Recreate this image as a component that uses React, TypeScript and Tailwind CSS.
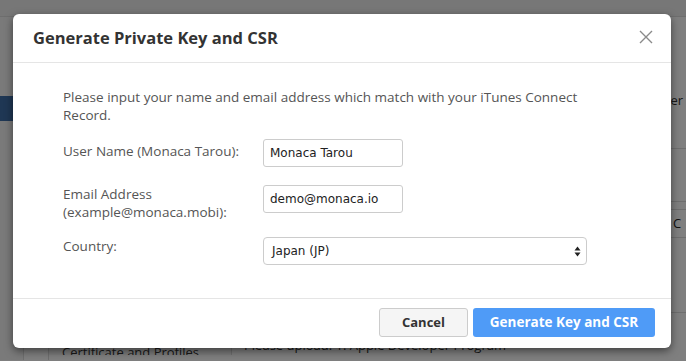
import React from "react";

export default function App() {
  const sans = { fontFamily: '"Open Sans", "Noto Sans", sans-serif' };
  const ui = { fontFamily: '"DejaVu Sans", Verdana, sans-serif' };
  return (
    <div className="relative w-[686px] h-[361px] overflow-hidden bg-white" style={sans}>
      {/* background page */}
      <div className="h-[17px] border-b border-[#dddddd] bg-[#eeeeee]" />
      <div className="flex h-[343px]">
        <div className="w-[24px] border-r border-[#dddddd] bg-[#f4f4f4]">
          <div className="mt-[79px] h-[25px] bg-[#3f6fa8]" />
        </div>
        <div className="w-[25px] border-r border-[#dddddd]" />
        <div className="flex-1 flex flex-col">
          <div className="h-[76px] shrink-0 flex items-end justify-end">
            <span className="text-[13px] text-[#333] leading-[18px] mb-[-16px] mr-[3px]">Register</span>
          </div>
          <div className="h-[56px] shrink-0 border-b border-[#dddddd]" />
          <div className="h-[53px] shrink-0 border-b border-[#dddddd]" />
          <div className="h-[8px] shrink-0 border-b border-[#dddddd]" />
          <div className="h-[28px] shrink-0 border-b border-[#dddddd] flex justify-end items-center">
            <span className="text-[13px] text-[#222] w-[13px] overflow-hidden">C</span>
          </div>
          <div className="h-[75px] shrink-0 border-b border-[#dddddd]" />
          <div className="flex h-[42px] shrink-0 overflow-hidden">
            <div className="w-[183px] border-r border-[#dddddd] bg-[#f7f7f7] pl-[13px] pt-[30px] text-[13px] text-[#333] leading-[18px] whitespace-nowrap">
              Certificate and Profiles
            </div>
            <div className="pl-[12px] pt-[23px] text-[13px] text-[#333] leading-[18px] whitespace-nowrap">
              Please upload: 1. Apple Developer Program
            </div>
          </div>
        </div>
      </div>

      {/* overlay */}
      <div className="absolute inset-0 bg-black/50" />

      {/* modal */}
      <div className="absolute left-[13px] top-[14px] w-[658px] h-[334px] bg-white rounded-[6px] shadow-[0_3px_9px_rgba(0,0,0,0.5)] flex flex-col">
        <div className="h-[49px] border-b border-[#e5e5e5] flex items-center justify-between pl-[20px] pr-[18px]">
          <h2 className="text-[16.5px] font-bold text-[#333] leading-none">Generate Private Key and CSR</h2>
          <svg width="14" height="14" viewBox="0 0 14 14" className="mt-[-2px]">
            <path d="M1 1 L13 13 M13 1 L1 13" stroke="#8a8a8a" strokeWidth="1.4" fill="none" />
          </svg>
        </div>
        <div className="flex-1 pl-[50px] pt-[25px] text-[13.5px] text-[#555] leading-[18px]">
          <p className="w-[530px]">Please input your name and email address which match with your iTunes Connect Record.</p>
          <div className="flex mt-[15px]">
            <label className="w-[200px] pt-[3px]">User Name (Monaca Tarou):</label>
            <div className="w-[140px] h-[28px] border border-[#cccccc] rounded-[3px] flex items-center pl-[6px] text-[12px] text-[#222]" style={ui}>
              Monaca Tarou
            </div>
          </div>
          <div className="flex mt-[18px]">
            <label className="w-[200px]">Email Address<br />(example@monaca.mobi):</label>
            <div className="w-[140px] h-[28px] border border-[#cccccc] rounded-[3px] flex items-center pl-[6px] text-[12px] text-[#222]" style={ui}>
              demo@monaca.io
            </div>
          </div>
          <div className="flex mt-[16px]">
            <label className="w-[200px]">Country:</label>
            <div className="w-[324px] h-[28px] border border-[#cccccc] rounded-[4px] flex items-center justify-between pl-[8px] pr-[5px] text-[12px] text-[#222]" style={ui}>
              <span>Japan (JP)</span>
              <svg width="7" height="11" viewBox="0 0 7 11">
                <path d="M3.5 0.5 L6.5 4.5 L0.5 4.5 Z M0.5 6.5 L6.5 6.5 L3.5 10.5 Z" fill="#222" />
              </svg>
            </div>
          </div>
        </div>
        <div className="h-[50px] border-t border-[#e5e5e5] flex items-center justify-end gap-[5px] pr-[16px] pb-[2px]">
          <button className="w-[89px] h-[29px] rounded-[3px] border border-[#cccccc] bg-[#f5f5f5] text-[13px] font-bold text-[#333]">
            Cancel
          </button>
          <button className="w-[182px] h-[29px] rounded-[3px] bg-[#4f9bf7] text-[13.5px] font-bold text-white">
            Generate Key and CSR
          </button>
        </div>
      </div>
    </div>
  );
}
